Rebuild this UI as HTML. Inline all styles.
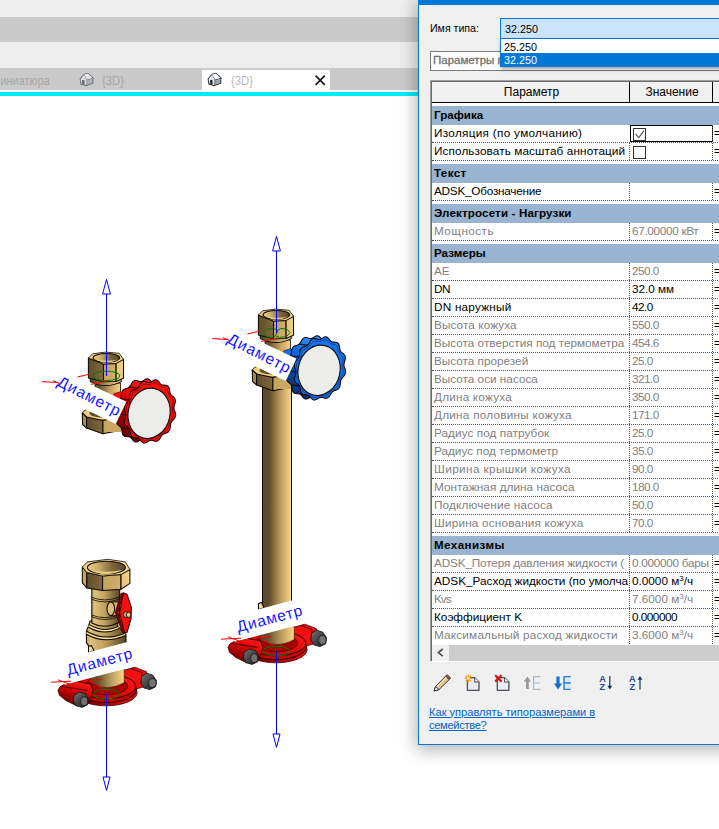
<!DOCTYPE html>
<html><head><meta charset="utf-8"><title>Revit</title>
<style>
*{box-sizing:border-box;margin:0;padding:0}
html,body{width:719px;height:829px;overflow:hidden;background:#fff;font-family:"Liberation Sans",sans-serif}
#app{position:relative;width:719px;height:829px;overflow:hidden;background:#fff}
.band{position:absolute;left:0;width:719px}
#b1{top:0;height:17px;background:#eee}
#b2{top:17px;height:25px;background:#cacaca}
#b3{top:42px;height:26px;background:#eee}
#tabs{top:68px;height:22px;background:#cacaca}
#cyan{top:92px;height:4px;background:#00eeff}
.tabtxt{position:absolute;font-size:12.6px;line-height:16px;top:73.4px;color:#a6a6a6;white-space:nowrap;transform-origin:0 0}
#acttab{position:absolute;left:202px;top:70px;width:128px;height:22px;background:#fff}
#view{position:absolute;left:0;top:96px;width:719px;height:733px;background:#fff}
#dlg{position:absolute;left:418px;top:0;width:320px;height:745px;background:#f0f0f0;border:1px solid #0078d7;border-top:5px solid #0078d7;box-shadow:0 3px 16px 2px rgba(0,0,0,.3)}
#lbl{position:absolute;left:430px;top:21px;font-size:10.6px;line-height:14px;color:#000;white-space:nowrap}
#combo{position:absolute;left:500px;top:18px;width:240px;height:21px;background:#cce4f7;border:1px solid #0078d7;font-size:10.8px;line-height:20px;padding-left:4px}
#list{position:absolute;left:500px;top:39px;width:240px;height:28px;background:#fff;border-left:1px solid #0078d7;box-shadow:1px 2px 4px rgba(0,0,0,.4);font-size:10.8px;line-height:13px;z-index:5}
#list div{height:14px;line-height:16px;padding-left:3px;white-space:nowrap}
#list div.s{background:#0078d7;color:#fff;height:14px;line-height:14px}
#search{position:absolute;left:430px;top:51px;width:300px;height:20px;background:#fff;border:1px solid #7a7a7a;font-size:11.5px;line-height:17px;padding-left:2px;color:#6b6b6b;white-space:nowrap;-webkit-text-stroke:.3px #777}
#tbl{position:absolute;left:430px;top:80px;width:300px;height:582px;background:#fff;border:1px solid #a0a0a0;border-bottom-color:#fff}
#tbl .in{position:absolute;left:0;top:0;right:0;bottom:0;border-left:1px solid #696969;border-top:1px solid #696969}
#hdr{position:absolute;left:432px;top:82px;width:290px;height:21px;background:#f0f0f0;border-bottom:1px solid #000;font-size:12px}
#hdr div{position:absolute;top:0;height:20px;line-height:21px;text-align:center;padding-left:2px;border-right:1px solid #000;color:#000}
#body{position:absolute;left:432px;top:103px;width:290px}
.grp{height:22px;padding-top:3px;background:#fff}
.grp span{display:block;height:19px;background:#99b4d1;font-weight:bold;font-size:11.6px;line-height:18px;padding-left:2px;color:#000;white-space:nowrap}
.row{height:18px;position:relative;font-size:11.75px;line-height:16px;color:#000;white-space:nowrap;border-bottom:1px dotted #555}
.row.dis{color:#7f7f7f}
.row:last-child{border-bottom-color:transparent}
.row>div{position:absolute;top:0;height:17px;overflow:hidden}
.c1{left:0;width:197px;padding-left:2px}
.c2{left:197px;width:83px;border-left:1px dotted #555;padding-left:2px}
.c3{left:280px;width:10px;border-left:1px dotted #555;padding-left:1px;color:#000}
.row.sel .c2{border:1px solid #000;left:198px;width:83px;height:17px;background:#fff;overflow:visible}
.cb{position:absolute;left:3px;top:3px;width:13px;height:13px;border:1px solid #333;background:#fff}
.row.sel .cb{left:2px;top:2px}
sup{font-size:8px;line-height:0;vertical-align:4px}
#hs{position:absolute;left:432px;top:645px;width:290px;height:16px;background:#f0f0f0}
#hs .th{position:absolute;left:17px;top:0;width:280px;height:16px;background:#cdcdcd}
#link{position:absolute;left:429px;top:705.5px;font-size:11.1px;line-height:13px;color:#0066cc;text-decoration:underline;white-space:nowrap}
svg{position:absolute;left:0;top:0;overflow:visible}
</style></head><body>
<div id="app">
<div id="view"></div>
<div class="band" id="b1"></div><div class="band" id="b2"></div><div class="band" id="b3"></div>
<div class="band" id="tabs"></div><div class="band" id="cyan"></div>
<div id="acttab"></div>
<div class="tabtxt" style="left:-6.6px;transform:scaleX(.865)">миниатюра</div>
<div class="tabtxt" style="left:102.4px;transform:scaleX(.9)">{3D}</div>
<div class="tabtxt" style="left:230.6px;color:#b9b9b9;transform:scaleX(.9)">{3D}</div>
<svg width="719" height="829" viewBox="0 0 719 829" style="z-index:1">
<defs>
<linearGradient id="gPipe" x1="0" x2="1" y1="0" y2="0">
 <stop offset="0" stop-color="#5c4b2b"/><stop offset="0.22" stop-color="#5f4e2d"/><stop offset="0.6" stop-color="#b6985a"/><stop offset="1" stop-color="#fdd888"/>
</linearGradient>
<linearGradient id="gBody" x1="0" x2="1" y1="0" y2="0">
 <stop offset="0" stop-color="#5c4b2b"/><stop offset="0.2" stop-color="#6b5730"/><stop offset="0.6" stop-color="#c4a25e"/><stop offset="1" stop-color="#f6d288"/>
</linearGradient>
<linearGradient id="gBodyL" x1="0" x2="1" y1="0" y2="0">
 <stop offset="0" stop-color="#c4a562"/><stop offset=".1" stop-color="#dcc07c"/><stop offset=".45" stop-color="#c2a25e"/><stop offset=".8" stop-color="#7c6638"/><stop offset="1" stop-color="#5a4828"/>
</linearGradient>
<linearGradient id="gDark" x1="0" x2="1" y1="0" y2="0">
 <stop offset="0" stop-color="#5f4d2b"/><stop offset="1" stop-color="#806a3c"/>
</linearGradient>
<linearGradient id="gMid" x1="0" x2="1" y1="0" y2="0">
 <stop offset="0" stop-color="#c4a35e"/><stop offset="1" stop-color="#d0af69"/>
</linearGradient>
<linearGradient id="gLight" x1="0" x2="1" y1="0" y2="0">
 <stop offset="0" stop-color="#e6c57b"/><stop offset="1" stop-color="#f2d086"/>
</linearGradient>
<linearGradient id="gHole" x1="0" x2="1" y1="0" y2="0">
 <stop offset="0" stop-color="#ecd08a"/><stop offset="0.3" stop-color="#c9aa66"/><stop offset="0.65" stop-color="#7a6536"/><stop offset="1" stop-color="#5a4928"/>
</linearGradient>
<linearGradient id="gTop" x1="0" x2="1" y1="0" y2="0">
 <stop offset="0" stop-color="#eccb82"/><stop offset="1" stop-color="#f8da90"/>
</linearGradient>
<linearGradient id="gRedSide" x1=".3" x2="0" y1="0" y2="1">
 <stop offset="0" stop-color="#ff1414"/><stop offset=".3" stop-color="#d80606"/><stop offset=".55" stop-color="#980000"/><stop offset="1" stop-color="#5a0000"/>
</linearGradient>
<linearGradient id="gBlueSide" x1=".3" x2="0" y1="0" y2="1">
 <stop offset="0" stop-color="#2a8cff"/><stop offset=".3" stop-color="#0a62d8"/><stop offset=".55" stop-color="#06449c"/><stop offset="1" stop-color="#032a62"/>
</linearGradient>
<linearGradient id="gEar" x1=".75" x2=".25" y1="0" y2="1">
 <stop offset="0" stop-color="#ff1c1c"/><stop offset=".35" stop-color="#e00808"/><stop offset=".7" stop-color="#980000"/><stop offset="1" stop-color="#5a0000"/>
</linearGradient>
<linearGradient id="gRing" x1="0" x2="1" y1="0" y2="0">
 <stop offset="0" stop-color="#5a0000"/><stop offset=".5" stop-color="#a80202"/><stop offset="1" stop-color="#e40c0c"/>
</linearGradient>
<linearGradient id="gRingTop" x1="0" x2="1" y1="1" y2="0">
 <stop offset="0" stop-color="#b00000"/><stop offset=".5" stop-color="#e00a0a"/><stop offset="1" stop-color="#ff1a1a"/>
</linearGradient>
<linearGradient id="gBolt" x1="0" x2="1" y1="0" y2="1">
 <stop offset="0" stop-color="#777"/><stop offset=".5" stop-color="#444"/><stop offset="1" stop-color="#1c1c1c"/>
</linearGradient>

<g id="headR">
<rect x="95" y="383" width="25.4" height="22" fill="url(#gBody)" stroke="#0e0901" stroke-width=".8"/>
<path d="M90.3,377.5 L90.3,381.6 Q106,389.5 121.2,381.6 L121.2,377.5 Z" fill="url(#gBody)" stroke="#0e0901" stroke-width="1.05"/>
<path d="M88.4,358 L103.5,364 L103.5,381.8 L88.4,378 Z" fill="url(#gDark)" stroke="#0e0901" stroke-width="1.05" stroke-linejoin="round"/>
<path d="M103.5,364 L116.1,363.4 L116.1,381.4 L103.5,381.8 Z" fill="url(#gMid)" stroke="#0e0901" stroke-width="1.05" stroke-linejoin="round"/>
<path d="M116.1,363.4 L123.5,359.3 L123.5,378.2 L116.1,381.4 Z" fill="url(#gLight)" stroke="#0e0901" stroke-width="1.05" stroke-linejoin="round"/>
<path d="M88.4,358 L92.6,353.8 L105.5,352.1 L119.2,353.3 L123.5,359.3 L116.1,363.4 L103.5,364 Z" fill="url(#gTop)" stroke="#0e0901" stroke-width=".8" stroke-linejoin="round"/>
<ellipse cx="106.4" cy="357.8" rx="13.3" ry="4.4" fill="url(#gHole)" stroke="#0e0901" stroke-width="1.05"/>
<path d="M95,359.6 Q106.4,365.4 118.6,359.4 Q106.4,362 95,359.6Z" fill="#f3d58a" opacity=".9"/>
<ellipse cx="101.6" cy="413.6" rx="19.4" ry="6.6" fill="url(#gTop)" stroke="#0e0901" stroke-width=".8"/>
<ellipse cx="103" cy="413.2" rx="13.4" ry="4.4" fill="#5c4b2b"/>
<path d="M82.3,413 L86.6,417 L86.6,428 L82.6,424.6 Z" fill="#a88a4e" stroke="#0e0901" stroke-width="1.05" stroke-linejoin="round"/>
<path d="M86.6,417 L102.9,420.6 L102.9,433.8 L86.6,428 Z" fill="url(#gDark)" stroke="#0e0901" stroke-width="1.05" stroke-linejoin="round"/>
<path d="M102.9,420.6 L119.8,417 L119.8,430.4 L102.9,433.8 Z" fill="url(#gMid)" stroke="#0e0901" stroke-width="1.05" stroke-linejoin="round"/>
<path d="M108,392 L121,392 L121,432 L108,432 Z" fill="#c9a862"/>
<path d="M113.6,394 L120.6,391.6 L124,395.4 L121,400.6 L114.4,398.6 Z" fill="#f50f0f" stroke="#300" stroke-width=".5"/>
<path d="M166.7,416.2 L166.3,417.0 L165.8,417.7 L165.3,418.4 L164.7,419.0 L164.2,419.6 L163.6,420.3 L163.2,420.9 L162.8,421.6 L162.5,422.3 L162.3,423.0 L162.1,423.8 L162.0,424.7 L161.9,425.6 L161.8,426.5 L161.7,427.4 L161.5,428.3 L161.2,429.1 L160.8,429.8 L160.3,430.5 L159.8,431.0 L159.1,431.5 L158.4,431.8 L157.7,432.1 L156.9,432.4 L156.2,432.6 L155.5,432.9 L154.9,433.2 L154.3,433.5 L153.8,434.0 L153.3,434.6 L152.8,435.2 L152.4,435.9 L152.0,436.7 L151.5,437.5 L151.0,438.2 L150.5,438.9 L149.9,439.4 L149.3,439.9 L148.6,440.2 L147.9,440.3 L147.2,440.3 L146.5,440.2 L145.8,440.1 L145.1,439.8 L144.4,439.6 L143.7,439.4 L143.1,439.3 L142.4,439.3 L141.8,439.4 L141.2,439.6 L140.5,439.9 L139.9,440.3 L139.2,440.7 L138.5,441.2 L137.8,441.5 L137.1,441.8 L136.4,442.0 L135.7,442.0 L135.0,441.9 L134.4,441.6 L133.8,441.2 L133.3,440.6 L132.7,440.1 L132.3,439.4 L131.8,438.8 L131.3,438.2 L130.8,437.7 L130.3,437.3 L129.8,437.0 L129.2,436.9 L128.5,436.8 L127.8,436.7 L127.1,436.7 L126.3,436.6 L125.6,436.5 L124.9,436.4 L124.3,436.1 L123.7,435.7 L123.2,435.2 L122.8,434.5 L122.5,433.8 L122.3,433.0 L122.1,432.1 L122.0,431.2 L121.8,430.4 L121.7,429.6 L121.5,428.8 L121.2,428.1 L120.9,427.5 L120.5,427.0 L120.0,426.5 L119.4,426.0 L118.9,425.6 L118.3,425.1 L117.7,424.5 L117.2,424.0 L116.8,423.3 L116.5,422.6 L116.3,421.8 L116.2,421.0 L116.3,420.1 L116.4,419.2 L116.7,418.3 L116.9,417.5 L117.2,416.6 L117.4,415.8 L117.5,415.0 L117.6,414.2 L117.6,413.4 L117.5,412.7 L117.3,411.9 L117.0,411.2 L116.7,410.4 L116.4,409.6 L116.2,408.8 L116.0,407.9 L116.0,407.1 L116.0,406.2 L116.2,405.4 L116.5,404.6 L116.9,403.8 L117.4,403.1 L117.9,402.4 L118.5,401.8 L119.0,401.2 L119.6,400.5 L120.0,399.9 L120.4,399.2 L120.7,398.5 L120.9,397.8 L121.1,397.0 L121.2,396.1 L121.3,395.2 L121.4,394.3 L121.5,393.4 L121.7,392.5 L122.0,391.7 L122.4,391.0 L122.9,390.3 L123.4,389.8 L124.1,389.3 L124.8,389.0 L125.5,388.7 L126.3,388.4 L127.0,388.2 L127.7,387.9 L128.3,387.6 L128.9,387.3 L129.4,386.8 L129.9,386.2 L130.4,385.6 L130.8,384.9 L131.2,384.1 L131.7,383.3 L132.2,382.6 L132.7,381.9 L133.3,381.4 L133.9,380.9 L134.6,380.6 L135.3,380.5 L136.0,380.5 L136.7,380.6 L137.4,380.7 L138.1,381.0 L138.8,381.2 L139.5,381.4 L140.1,381.5 L140.8,381.5 L141.4,381.4 L142.0,381.2 L142.7,380.9 L143.3,380.5 L144.0,380.1 L144.7,379.6 L145.4,379.3 L146.1,379.0 L146.8,378.8 L147.5,378.8 L148.2,378.9 L148.8,379.2 L149.4,379.6 L149.9,380.2 L150.5,380.7 L150.9,381.4 L151.4,382.0 L151.9,382.6 L152.4,383.1 L152.9,383.5 L153.4,383.8 L154.0,383.9 L154.7,384.0 L155.4,384.1 L156.1,384.1 L156.9,384.2 L157.6,384.3 L158.3,384.4 L158.9,384.7 L159.5,385.1 L160.0,385.6 L160.4,386.3 L160.7,387.0 L160.9,387.8 L161.1,388.7 L161.2,389.6 L161.4,390.4 L161.5,391.2 L161.7,392.0 L162.0,392.7 L162.3,393.3 L162.7,393.8 L163.2,394.3 L163.8,394.8 L164.3,395.2 L164.9,395.7 L165.5,396.3 L166.0,396.8 L166.4,397.5 L166.7,398.2 L166.9,399.0 L167.0,399.8 L166.9,400.7 L166.8,401.6 L166.5,402.5 L166.3,403.3 L166.0,404.2 L165.8,405.0 L165.7,405.8 L165.6,406.6 L165.6,407.4 L165.7,408.1 L165.9,408.9 L166.2,409.6 L166.5,410.4 L166.8,411.2 L167.0,412.0 L167.2,412.9 L167.2,413.7 L167.2,414.6 L167.0,415.4Z" fill="url(#gRedSide)" stroke="#1a0000" stroke-width="1.05"/>
<path d="M138.5,438.2 L130.1,437.2 M129.5,428.9 L121.1,427.9 M126.0,414.9 L117.6,413.9 M128.9,399.9 L120.5,398.9 M137.5,388.1 L129.1,387.1 M149.4,382.5 L141.0,381.5" fill="none" stroke="#1a0000" stroke-width="1.2" opacity=".75"/>
<path d="M175.1,417.2 L174.7,418.0 L174.2,418.7 L173.7,419.4 L173.1,420.0 L172.6,420.6 L172.0,421.3 L171.6,421.9 L171.2,422.6 L170.9,423.3 L170.7,424.0 L170.5,424.8 L170.4,425.7 L170.3,426.6 L170.2,427.5 L170.1,428.4 L169.9,429.3 L169.6,430.1 L169.2,430.8 L168.7,431.5 L168.2,432.0 L167.5,432.5 L166.8,432.8 L166.1,433.1 L165.3,433.4 L164.6,433.6 L163.9,433.9 L163.3,434.2 L162.7,434.5 L162.2,435.0 L161.7,435.6 L161.2,436.2 L160.8,436.9 L160.4,437.7 L159.9,438.5 L159.4,439.2 L158.9,439.9 L158.3,440.4 L157.7,440.9 L157.0,441.2 L156.3,441.3 L155.6,441.3 L154.9,441.2 L154.2,441.1 L153.5,440.8 L152.8,440.6 L152.1,440.4 L151.5,440.3 L150.8,440.3 L150.2,440.4 L149.6,440.6 L148.9,440.9 L148.3,441.3 L147.6,441.7 L146.9,442.2 L146.2,442.5 L145.5,442.8 L144.8,443.0 L144.1,443.0 L143.4,442.9 L142.8,442.6 L142.2,442.2 L141.7,441.6 L141.1,441.1 L140.7,440.4 L140.2,439.8 L139.7,439.2 L139.2,438.7 L138.7,438.3 L138.2,438.0 L137.6,437.9 L136.9,437.8 L136.2,437.7 L135.5,437.7 L134.7,437.6 L134.0,437.5 L133.3,437.4 L132.7,437.1 L132.1,436.7 L131.6,436.2 L131.2,435.5 L130.9,434.8 L130.7,434.0 L130.5,433.1 L130.4,432.2 L130.2,431.4 L130.1,430.6 L129.9,429.8 L129.6,429.1 L129.3,428.5 L128.9,428.0 L128.4,427.5 L127.8,427.0 L127.3,426.6 L126.7,426.1 L126.1,425.5 L125.6,425.0 L125.2,424.3 L124.9,423.6 L124.7,422.8 L124.6,422.0 L124.7,421.1 L124.8,420.2 L125.1,419.3 L125.3,418.5 L125.6,417.6 L125.8,416.8 L125.9,416.0 L126.0,415.2 L126.0,414.4 L125.9,413.7 L125.7,412.9 L125.4,412.2 L125.1,411.4 L124.8,410.6 L124.6,409.8 L124.4,408.9 L124.4,408.1 L124.4,407.2 L124.6,406.4 L124.9,405.6 L125.3,404.8 L125.8,404.1 L126.3,403.4 L126.9,402.8 L127.4,402.2 L128.0,401.5 L128.4,400.9 L128.8,400.2 L129.1,399.5 L129.3,398.8 L129.5,398.0 L129.6,397.1 L129.7,396.2 L129.8,395.3 L129.9,394.4 L130.1,393.5 L130.4,392.7 L130.8,392.0 L131.3,391.3 L131.8,390.8 L132.5,390.3 L133.2,390.0 L133.9,389.7 L134.7,389.4 L135.4,389.2 L136.1,388.9 L136.7,388.6 L137.3,388.3 L137.8,387.8 L138.3,387.2 L138.8,386.6 L139.2,385.9 L139.6,385.1 L140.1,384.3 L140.6,383.6 L141.1,382.9 L141.7,382.4 L142.3,381.9 L143.0,381.6 L143.7,381.5 L144.4,381.5 L145.1,381.6 L145.8,381.7 L146.5,382.0 L147.2,382.2 L147.9,382.4 L148.5,382.5 L149.2,382.5 L149.8,382.4 L150.4,382.2 L151.1,381.9 L151.7,381.5 L152.4,381.1 L153.1,380.6 L153.8,380.3 L154.5,380.0 L155.2,379.8 L155.9,379.8 L156.6,379.9 L157.2,380.2 L157.8,380.6 L158.3,381.2 L158.9,381.7 L159.3,382.4 L159.8,383.0 L160.3,383.6 L160.8,384.1 L161.3,384.5 L161.8,384.8 L162.4,384.9 L163.1,385.0 L163.8,385.1 L164.5,385.1 L165.3,385.2 L166.0,385.3 L166.7,385.4 L167.3,385.7 L167.9,386.1 L168.4,386.6 L168.8,387.3 L169.1,388.0 L169.3,388.8 L169.5,389.7 L169.6,390.6 L169.8,391.4 L169.9,392.2 L170.1,393.0 L170.4,393.7 L170.7,394.3 L171.1,394.8 L171.6,395.3 L172.2,395.8 L172.7,396.2 L173.3,396.7 L173.9,397.3 L174.4,397.8 L174.8,398.5 L175.1,399.2 L175.3,400.0 L175.4,400.8 L175.3,401.7 L175.2,402.6 L174.9,403.5 L174.7,404.3 L174.4,405.2 L174.2,406.0 L174.1,406.8 L174.0,407.6 L174.0,408.4 L174.1,409.1 L174.3,409.9 L174.6,410.6 L174.9,411.4 L175.2,412.2 L175.4,413.0 L175.6,413.9 L175.6,414.7 L175.6,415.6 L175.4,416.4Z" fill="#f50f0f" stroke="#1a0000" stroke-width="1.05"/>
<path d="M172.9,416.9 L172.6,417.6 L172.2,418.3 L171.7,418.9 L171.3,419.5 L170.8,420.2 L170.4,420.8 L170.0,421.4 L169.7,422.0 L169.4,422.7 L169.2,423.3 L169.0,424.1 L168.9,424.8 L168.7,425.6 L168.6,426.4 L168.4,427.2 L168.1,427.9 L167.8,428.7 L167.5,429.3 L167.0,429.9 L166.5,430.4 L166.0,430.9 L165.4,431.3 L164.8,431.6 L164.1,431.9 L163.5,432.2 L162.9,432.5 L162.3,432.8 L161.8,433.2 L161.3,433.6 L160.8,434.1 L160.4,434.6 L160.0,435.2 L159.5,435.9 L159.1,436.5 L158.6,437.1 L158.1,437.6 L157.5,438.1 L157.0,438.5 L156.4,438.8 L155.7,438.9 L155.1,439.0 L154.5,439.0 L153.8,438.9 L153.2,438.8 L152.6,438.7 L151.9,438.6 L151.3,438.5 L150.8,438.5 L150.2,438.6 L149.6,438.8 L149.0,439.0 L148.4,439.3 L147.8,439.6 L147.1,439.9 L146.5,440.2 L145.9,440.4 L145.2,440.5 L144.6,440.5 L144.0,440.4 L143.4,440.1 L142.9,439.8 L142.3,439.4 L141.9,438.9 L141.4,438.4 L140.9,437.9 L140.5,437.5 L140.0,437.0 L139.5,436.7 L139.0,436.4 L138.4,436.2 L137.9,436.1 L137.3,436.0 L136.6,435.9 L136.0,435.8 L135.4,435.6 L134.7,435.4 L134.2,435.1 L133.7,434.7 L133.2,434.2 L132.8,433.7 L132.5,433.0 L132.3,432.3 L132.1,431.6 L131.9,430.8 L131.7,430.1 L131.5,429.4 L131.3,428.8 L131.1,428.1 L130.8,427.6 L130.4,427.1 L130.0,426.6 L129.5,426.1 L129.1,425.6 L128.6,425.1 L128.1,424.6 L127.7,424.0 L127.4,423.4 L127.1,422.7 L127.0,422.0 L126.9,421.3 L126.9,420.5 L127.0,419.7 L127.1,418.9 L127.3,418.1 L127.4,417.4 L127.6,416.6 L127.7,415.9 L127.7,415.1 L127.7,414.4 L127.6,413.7 L127.5,413.0 L127.3,412.3 L127.1,411.6 L126.9,410.9 L126.8,410.1 L126.7,409.3 L126.6,408.6 L126.7,407.8 L126.9,407.0 L127.1,406.3 L127.4,405.6 L127.8,404.9 L128.3,404.3 L128.7,403.7 L129.2,403.0 L129.6,402.4 L130.0,401.8 L130.3,401.2 L130.6,400.5 L130.8,399.9 L131.0,399.1 L131.1,398.4 L131.3,397.6 L131.4,396.8 L131.6,396.0 L131.9,395.3 L132.2,394.5 L132.5,393.9 L133.0,393.3 L133.5,392.8 L134.0,392.3 L134.6,391.9 L135.2,391.6 L135.9,391.3 L136.5,391.0 L137.1,390.7 L137.7,390.4 L138.2,390.0 L138.7,389.6 L139.2,389.1 L139.6,388.6 L140.0,388.0 L140.5,387.3 L140.9,386.7 L141.4,386.1 L141.9,385.6 L142.5,385.1 L143.0,384.7 L143.6,384.4 L144.3,384.3 L144.9,384.2 L145.5,384.2 L146.2,384.3 L146.8,384.4 L147.4,384.5 L148.1,384.6 L148.7,384.7 L149.2,384.7 L149.8,384.6 L150.4,384.4 L151.0,384.2 L151.6,383.9 L152.2,383.6 L152.9,383.3 L153.5,383.0 L154.1,382.8 L154.8,382.7 L155.4,382.7 L156.0,382.8 L156.6,383.1 L157.1,383.4 L157.7,383.8 L158.1,384.3 L158.6,384.8 L159.1,385.3 L159.5,385.7 L160.0,386.2 L160.5,386.5 L161.0,386.8 L161.6,387.0 L162.1,387.1 L162.7,387.2 L163.4,387.3 L164.0,387.4 L164.6,387.6 L165.3,387.8 L165.8,388.1 L166.3,388.5 L166.8,389.0 L167.2,389.5 L167.5,390.2 L167.7,390.9 L167.9,391.6 L168.1,392.4 L168.3,393.1 L168.5,393.8 L168.7,394.4 L168.9,395.1 L169.2,395.6 L169.6,396.1 L170.0,396.6 L170.5,397.1 L170.9,397.6 L171.4,398.1 L171.9,398.6 L172.3,399.2 L172.6,399.8 L172.9,400.5 L173.0,401.2 L173.1,401.9 L173.1,402.7 L173.0,403.5 L172.9,404.3 L172.7,405.1 L172.6,405.8 L172.4,406.6 L172.3,407.3 L172.3,408.1 L172.3,408.8 L172.4,409.5 L172.5,410.2 L172.7,410.9 L172.9,411.6 L173.1,412.3 L173.2,413.1 L173.3,413.9 L173.4,414.6 L173.3,415.4 L173.1,416.2Z" fill="none" stroke="#7a0000" stroke-width=".8"/>
<ellipse cx="149.1" cy="413.3" rx="20.9" ry="25.3" transform="rotate(13 149.1 413.3)" fill="#ececea" stroke="#111" stroke-width="1.1"/>
</g>
<g id="headB">
<rect x="95" y="383" width="25.4" height="22" fill="url(#gBody)" stroke="#0e0901" stroke-width=".8"/>
<path d="M90.3,377.5 L90.3,381.6 Q106,389.5 121.2,381.6 L121.2,377.5 Z" fill="url(#gBody)" stroke="#0e0901" stroke-width="1.05"/>
<path d="M88.4,358 L103.5,364 L103.5,381.8 L88.4,378 Z" fill="url(#gDark)" stroke="#0e0901" stroke-width="1.05" stroke-linejoin="round"/>
<path d="M103.5,364 L116.1,363.4 L116.1,381.4 L103.5,381.8 Z" fill="url(#gMid)" stroke="#0e0901" stroke-width="1.05" stroke-linejoin="round"/>
<path d="M116.1,363.4 L123.5,359.3 L123.5,378.2 L116.1,381.4 Z" fill="url(#gLight)" stroke="#0e0901" stroke-width="1.05" stroke-linejoin="round"/>
<path d="M88.4,358 L92.6,353.8 L105.5,352.1 L119.2,353.3 L123.5,359.3 L116.1,363.4 L103.5,364 Z" fill="url(#gTop)" stroke="#0e0901" stroke-width=".8" stroke-linejoin="round"/>
<ellipse cx="106.4" cy="357.8" rx="13.3" ry="4.4" fill="url(#gHole)" stroke="#0e0901" stroke-width="1.05"/>
<path d="M95,359.6 Q106.4,365.4 118.6,359.4 Q106.4,362 95,359.6Z" fill="#f3d58a" opacity=".9"/>
<ellipse cx="101.6" cy="413.6" rx="19.4" ry="6.6" fill="url(#gTop)" stroke="#0e0901" stroke-width=".8"/>
<ellipse cx="103" cy="413.2" rx="13.4" ry="4.4" fill="#5c4b2b"/>
<path d="M82.3,413 L86.6,417 L86.6,428 L82.6,424.6 Z" fill="#a88a4e" stroke="#0e0901" stroke-width="1.05" stroke-linejoin="round"/>
<path d="M86.6,417 L102.9,420.6 L102.9,433.8 L86.6,428 Z" fill="url(#gDark)" stroke="#0e0901" stroke-width="1.05" stroke-linejoin="round"/>
<path d="M102.9,420.6 L119.8,417 L119.8,430.4 L102.9,433.8 Z" fill="url(#gMid)" stroke="#0e0901" stroke-width="1.05" stroke-linejoin="round"/>
<path d="M108,392 L121,392 L121,432 L108,432 Z" fill="#c9a862"/>
<path d="M113.6,394 L120.6,391.6 L124,395.4 L121,400.6 L114.4,398.6 Z" fill="#1672e6" stroke="#300" stroke-width=".5"/>
<path d="M166.7,416.2 L166.3,417.0 L165.8,417.7 L165.3,418.4 L164.7,419.0 L164.2,419.6 L163.6,420.3 L163.2,420.9 L162.8,421.6 L162.5,422.3 L162.3,423.0 L162.1,423.8 L162.0,424.7 L161.9,425.6 L161.8,426.5 L161.7,427.4 L161.5,428.3 L161.2,429.1 L160.8,429.8 L160.3,430.5 L159.8,431.0 L159.1,431.5 L158.4,431.8 L157.7,432.1 L156.9,432.4 L156.2,432.6 L155.5,432.9 L154.9,433.2 L154.3,433.5 L153.8,434.0 L153.3,434.6 L152.8,435.2 L152.4,435.9 L152.0,436.7 L151.5,437.5 L151.0,438.2 L150.5,438.9 L149.9,439.4 L149.3,439.9 L148.6,440.2 L147.9,440.3 L147.2,440.3 L146.5,440.2 L145.8,440.1 L145.1,439.8 L144.4,439.6 L143.7,439.4 L143.1,439.3 L142.4,439.3 L141.8,439.4 L141.2,439.6 L140.5,439.9 L139.9,440.3 L139.2,440.7 L138.5,441.2 L137.8,441.5 L137.1,441.8 L136.4,442.0 L135.7,442.0 L135.0,441.9 L134.4,441.6 L133.8,441.2 L133.3,440.6 L132.7,440.1 L132.3,439.4 L131.8,438.8 L131.3,438.2 L130.8,437.7 L130.3,437.3 L129.8,437.0 L129.2,436.9 L128.5,436.8 L127.8,436.7 L127.1,436.7 L126.3,436.6 L125.6,436.5 L124.9,436.4 L124.3,436.1 L123.7,435.7 L123.2,435.2 L122.8,434.5 L122.5,433.8 L122.3,433.0 L122.1,432.1 L122.0,431.2 L121.8,430.4 L121.7,429.6 L121.5,428.8 L121.2,428.1 L120.9,427.5 L120.5,427.0 L120.0,426.5 L119.4,426.0 L118.9,425.6 L118.3,425.1 L117.7,424.5 L117.2,424.0 L116.8,423.3 L116.5,422.6 L116.3,421.8 L116.2,421.0 L116.3,420.1 L116.4,419.2 L116.7,418.3 L116.9,417.5 L117.2,416.6 L117.4,415.8 L117.5,415.0 L117.6,414.2 L117.6,413.4 L117.5,412.7 L117.3,411.9 L117.0,411.2 L116.7,410.4 L116.4,409.6 L116.2,408.8 L116.0,407.9 L116.0,407.1 L116.0,406.2 L116.2,405.4 L116.5,404.6 L116.9,403.8 L117.4,403.1 L117.9,402.4 L118.5,401.8 L119.0,401.2 L119.6,400.5 L120.0,399.9 L120.4,399.2 L120.7,398.5 L120.9,397.8 L121.1,397.0 L121.2,396.1 L121.3,395.2 L121.4,394.3 L121.5,393.4 L121.7,392.5 L122.0,391.7 L122.4,391.0 L122.9,390.3 L123.4,389.8 L124.1,389.3 L124.8,389.0 L125.5,388.7 L126.3,388.4 L127.0,388.2 L127.7,387.9 L128.3,387.6 L128.9,387.3 L129.4,386.8 L129.9,386.2 L130.4,385.6 L130.8,384.9 L131.2,384.1 L131.7,383.3 L132.2,382.6 L132.7,381.9 L133.3,381.4 L133.9,380.9 L134.6,380.6 L135.3,380.5 L136.0,380.5 L136.7,380.6 L137.4,380.7 L138.1,381.0 L138.8,381.2 L139.5,381.4 L140.1,381.5 L140.8,381.5 L141.4,381.4 L142.0,381.2 L142.7,380.9 L143.3,380.5 L144.0,380.1 L144.7,379.6 L145.4,379.3 L146.1,379.0 L146.8,378.8 L147.5,378.8 L148.2,378.9 L148.8,379.2 L149.4,379.6 L149.9,380.2 L150.5,380.7 L150.9,381.4 L151.4,382.0 L151.9,382.6 L152.4,383.1 L152.9,383.5 L153.4,383.8 L154.0,383.9 L154.7,384.0 L155.4,384.1 L156.1,384.1 L156.9,384.2 L157.6,384.3 L158.3,384.4 L158.9,384.7 L159.5,385.1 L160.0,385.6 L160.4,386.3 L160.7,387.0 L160.9,387.8 L161.1,388.7 L161.2,389.6 L161.4,390.4 L161.5,391.2 L161.7,392.0 L162.0,392.7 L162.3,393.3 L162.7,393.8 L163.2,394.3 L163.8,394.8 L164.3,395.2 L164.9,395.7 L165.5,396.3 L166.0,396.8 L166.4,397.5 L166.7,398.2 L166.9,399.0 L167.0,399.8 L166.9,400.7 L166.8,401.6 L166.5,402.5 L166.3,403.3 L166.0,404.2 L165.8,405.0 L165.7,405.8 L165.6,406.6 L165.6,407.4 L165.7,408.1 L165.9,408.9 L166.2,409.6 L166.5,410.4 L166.8,411.2 L167.0,412.0 L167.2,412.9 L167.2,413.7 L167.2,414.6 L167.0,415.4Z" fill="url(#gBlueSide)" stroke="#1a0000" stroke-width="1.05"/>
<path d="M138.5,438.2 L130.1,437.2 M129.5,428.9 L121.1,427.9 M126.0,414.9 L117.6,413.9 M128.9,399.9 L120.5,398.9 M137.5,388.1 L129.1,387.1 M149.4,382.5 L141.0,381.5" fill="none" stroke="#1a0000" stroke-width="1.2" opacity=".75"/>
<path d="M175.1,417.2 L174.7,418.0 L174.2,418.7 L173.7,419.4 L173.1,420.0 L172.6,420.6 L172.0,421.3 L171.6,421.9 L171.2,422.6 L170.9,423.3 L170.7,424.0 L170.5,424.8 L170.4,425.7 L170.3,426.6 L170.2,427.5 L170.1,428.4 L169.9,429.3 L169.6,430.1 L169.2,430.8 L168.7,431.5 L168.2,432.0 L167.5,432.5 L166.8,432.8 L166.1,433.1 L165.3,433.4 L164.6,433.6 L163.9,433.9 L163.3,434.2 L162.7,434.5 L162.2,435.0 L161.7,435.6 L161.2,436.2 L160.8,436.9 L160.4,437.7 L159.9,438.5 L159.4,439.2 L158.9,439.9 L158.3,440.4 L157.7,440.9 L157.0,441.2 L156.3,441.3 L155.6,441.3 L154.9,441.2 L154.2,441.1 L153.5,440.8 L152.8,440.6 L152.1,440.4 L151.5,440.3 L150.8,440.3 L150.2,440.4 L149.6,440.6 L148.9,440.9 L148.3,441.3 L147.6,441.7 L146.9,442.2 L146.2,442.5 L145.5,442.8 L144.8,443.0 L144.1,443.0 L143.4,442.9 L142.8,442.6 L142.2,442.2 L141.7,441.6 L141.1,441.1 L140.7,440.4 L140.2,439.8 L139.7,439.2 L139.2,438.7 L138.7,438.3 L138.2,438.0 L137.6,437.9 L136.9,437.8 L136.2,437.7 L135.5,437.7 L134.7,437.6 L134.0,437.5 L133.3,437.4 L132.7,437.1 L132.1,436.7 L131.6,436.2 L131.2,435.5 L130.9,434.8 L130.7,434.0 L130.5,433.1 L130.4,432.2 L130.2,431.4 L130.1,430.6 L129.9,429.8 L129.6,429.1 L129.3,428.5 L128.9,428.0 L128.4,427.5 L127.8,427.0 L127.3,426.6 L126.7,426.1 L126.1,425.5 L125.6,425.0 L125.2,424.3 L124.9,423.6 L124.7,422.8 L124.6,422.0 L124.7,421.1 L124.8,420.2 L125.1,419.3 L125.3,418.5 L125.6,417.6 L125.8,416.8 L125.9,416.0 L126.0,415.2 L126.0,414.4 L125.9,413.7 L125.7,412.9 L125.4,412.2 L125.1,411.4 L124.8,410.6 L124.6,409.8 L124.4,408.9 L124.4,408.1 L124.4,407.2 L124.6,406.4 L124.9,405.6 L125.3,404.8 L125.8,404.1 L126.3,403.4 L126.9,402.8 L127.4,402.2 L128.0,401.5 L128.4,400.9 L128.8,400.2 L129.1,399.5 L129.3,398.8 L129.5,398.0 L129.6,397.1 L129.7,396.2 L129.8,395.3 L129.9,394.4 L130.1,393.5 L130.4,392.7 L130.8,392.0 L131.3,391.3 L131.8,390.8 L132.5,390.3 L133.2,390.0 L133.9,389.7 L134.7,389.4 L135.4,389.2 L136.1,388.9 L136.7,388.6 L137.3,388.3 L137.8,387.8 L138.3,387.2 L138.8,386.6 L139.2,385.9 L139.6,385.1 L140.1,384.3 L140.6,383.6 L141.1,382.9 L141.7,382.4 L142.3,381.9 L143.0,381.6 L143.7,381.5 L144.4,381.5 L145.1,381.6 L145.8,381.7 L146.5,382.0 L147.2,382.2 L147.9,382.4 L148.5,382.5 L149.2,382.5 L149.8,382.4 L150.4,382.2 L151.1,381.9 L151.7,381.5 L152.4,381.1 L153.1,380.6 L153.8,380.3 L154.5,380.0 L155.2,379.8 L155.9,379.8 L156.6,379.9 L157.2,380.2 L157.8,380.6 L158.3,381.2 L158.9,381.7 L159.3,382.4 L159.8,383.0 L160.3,383.6 L160.8,384.1 L161.3,384.5 L161.8,384.8 L162.4,384.9 L163.1,385.0 L163.8,385.1 L164.5,385.1 L165.3,385.2 L166.0,385.3 L166.7,385.4 L167.3,385.7 L167.9,386.1 L168.4,386.6 L168.8,387.3 L169.1,388.0 L169.3,388.8 L169.5,389.7 L169.6,390.6 L169.8,391.4 L169.9,392.2 L170.1,393.0 L170.4,393.7 L170.7,394.3 L171.1,394.8 L171.6,395.3 L172.2,395.8 L172.7,396.2 L173.3,396.7 L173.9,397.3 L174.4,397.8 L174.8,398.5 L175.1,399.2 L175.3,400.0 L175.4,400.8 L175.3,401.7 L175.2,402.6 L174.9,403.5 L174.7,404.3 L174.4,405.2 L174.2,406.0 L174.1,406.8 L174.0,407.6 L174.0,408.4 L174.1,409.1 L174.3,409.9 L174.6,410.6 L174.9,411.4 L175.2,412.2 L175.4,413.0 L175.6,413.9 L175.6,414.7 L175.6,415.6 L175.4,416.4Z" fill="#1672e6" stroke="#1a0000" stroke-width="1.05"/>
<path d="M172.9,416.9 L172.6,417.6 L172.2,418.3 L171.7,418.9 L171.3,419.5 L170.8,420.2 L170.4,420.8 L170.0,421.4 L169.7,422.0 L169.4,422.7 L169.2,423.3 L169.0,424.1 L168.9,424.8 L168.7,425.6 L168.6,426.4 L168.4,427.2 L168.1,427.9 L167.8,428.7 L167.5,429.3 L167.0,429.9 L166.5,430.4 L166.0,430.9 L165.4,431.3 L164.8,431.6 L164.1,431.9 L163.5,432.2 L162.9,432.5 L162.3,432.8 L161.8,433.2 L161.3,433.6 L160.8,434.1 L160.4,434.6 L160.0,435.2 L159.5,435.9 L159.1,436.5 L158.6,437.1 L158.1,437.6 L157.5,438.1 L157.0,438.5 L156.4,438.8 L155.7,438.9 L155.1,439.0 L154.5,439.0 L153.8,438.9 L153.2,438.8 L152.6,438.7 L151.9,438.6 L151.3,438.5 L150.8,438.5 L150.2,438.6 L149.6,438.8 L149.0,439.0 L148.4,439.3 L147.8,439.6 L147.1,439.9 L146.5,440.2 L145.9,440.4 L145.2,440.5 L144.6,440.5 L144.0,440.4 L143.4,440.1 L142.9,439.8 L142.3,439.4 L141.9,438.9 L141.4,438.4 L140.9,437.9 L140.5,437.5 L140.0,437.0 L139.5,436.7 L139.0,436.4 L138.4,436.2 L137.9,436.1 L137.3,436.0 L136.6,435.9 L136.0,435.8 L135.4,435.6 L134.7,435.4 L134.2,435.1 L133.7,434.7 L133.2,434.2 L132.8,433.7 L132.5,433.0 L132.3,432.3 L132.1,431.6 L131.9,430.8 L131.7,430.1 L131.5,429.4 L131.3,428.8 L131.1,428.1 L130.8,427.6 L130.4,427.1 L130.0,426.6 L129.5,426.1 L129.1,425.6 L128.6,425.1 L128.1,424.6 L127.7,424.0 L127.4,423.4 L127.1,422.7 L127.0,422.0 L126.9,421.3 L126.9,420.5 L127.0,419.7 L127.1,418.9 L127.3,418.1 L127.4,417.4 L127.6,416.6 L127.7,415.9 L127.7,415.1 L127.7,414.4 L127.6,413.7 L127.5,413.0 L127.3,412.3 L127.1,411.6 L126.9,410.9 L126.8,410.1 L126.7,409.3 L126.6,408.6 L126.7,407.8 L126.9,407.0 L127.1,406.3 L127.4,405.6 L127.8,404.9 L128.3,404.3 L128.7,403.7 L129.2,403.0 L129.6,402.4 L130.0,401.8 L130.3,401.2 L130.6,400.5 L130.8,399.9 L131.0,399.1 L131.1,398.4 L131.3,397.6 L131.4,396.8 L131.6,396.0 L131.9,395.3 L132.2,394.5 L132.5,393.9 L133.0,393.3 L133.5,392.8 L134.0,392.3 L134.6,391.9 L135.2,391.6 L135.9,391.3 L136.5,391.0 L137.1,390.7 L137.7,390.4 L138.2,390.0 L138.7,389.6 L139.2,389.1 L139.6,388.6 L140.0,388.0 L140.5,387.3 L140.9,386.7 L141.4,386.1 L141.9,385.6 L142.5,385.1 L143.0,384.7 L143.6,384.4 L144.3,384.3 L144.9,384.2 L145.5,384.2 L146.2,384.3 L146.8,384.4 L147.4,384.5 L148.1,384.6 L148.7,384.7 L149.2,384.7 L149.8,384.6 L150.4,384.4 L151.0,384.2 L151.6,383.9 L152.2,383.6 L152.9,383.3 L153.5,383.0 L154.1,382.8 L154.8,382.7 L155.4,382.7 L156.0,382.8 L156.6,383.1 L157.1,383.4 L157.7,383.8 L158.1,384.3 L158.6,384.8 L159.1,385.3 L159.5,385.7 L160.0,386.2 L160.5,386.5 L161.0,386.8 L161.6,387.0 L162.1,387.1 L162.7,387.2 L163.4,387.3 L164.0,387.4 L164.6,387.6 L165.3,387.8 L165.8,388.1 L166.3,388.5 L166.8,389.0 L167.2,389.5 L167.5,390.2 L167.7,390.9 L167.9,391.6 L168.1,392.4 L168.3,393.1 L168.5,393.8 L168.7,394.4 L168.9,395.1 L169.2,395.6 L169.6,396.1 L170.0,396.6 L170.5,397.1 L170.9,397.6 L171.4,398.1 L171.9,398.6 L172.3,399.2 L172.6,399.8 L172.9,400.5 L173.0,401.2 L173.1,401.9 L173.1,402.7 L173.0,403.5 L172.9,404.3 L172.7,405.1 L172.6,405.8 L172.4,406.6 L172.3,407.3 L172.3,408.1 L172.3,408.8 L172.4,409.5 L172.5,410.2 L172.7,410.9 L172.9,411.6 L173.1,412.3 L173.2,413.1 L173.3,413.9 L173.4,414.6 L173.3,415.4 L173.1,416.2Z" fill="none" stroke="#063a86" stroke-width=".8"/>
<ellipse cx="149.1" cy="413.3" rx="20.9" ry="25.3" transform="rotate(13 149.1 413.3)" fill="#ececea" stroke="#111" stroke-width="1.1"/>
</g>
<g id="base">
<path d="M122.8,670.6 L134.8,667.2 L146.6,671.8 L147,680 L144.4,686.6 L136.4,689 L124,683 Z" fill="#f01010" stroke="#300" stroke-width=".8" stroke-linejoin="round"/>
<path d="M131,668.4 L142,672.6 L141,684.6" fill="none" stroke="#500" stroke-width="1.05"/>
<ellipse cx="106.1" cy="692.6" rx="31" ry="13.2" fill="url(#gRing)" stroke="#300" stroke-width=".8"/>
<ellipse cx="106.1" cy="689.6" rx="30.4" ry="12.8" fill="#c40404" stroke="#400" stroke-width="1.05"/>
<ellipse cx="106.1" cy="686.4" rx="29.6" ry="12.2" fill="url(#gRingTop)" stroke="#400" stroke-width="1.05"/>
<ellipse cx="106.1" cy="686" rx="21.5" ry="8.8" fill="#a80000" stroke="#500" stroke-width=".8"/>
<path d="M90,660 L124.2,660 L124.2,682.6 Q107,692.6 90,683 Z" fill="url(#gPipe)" stroke="#0e0901" stroke-width=".5"/>
<path d="M141.6,676.4 L146.4,673.2 L152.6,675 L156.4,680.4 L155.6,686.8 L150,689.6 L144,688 L141,683 Z" fill="url(#gBolt)" stroke="#111" stroke-width=".8" stroke-linejoin="round"/>
<ellipse cx="152.4" cy="683" rx="3.8" ry="4.6" fill="#747474" stroke="#222" stroke-width="1.05"/>
<path d="M58,690.6 L60,686.8 L64,684.6 L77,681.4 L90.4,684 L93,691 L89,702 L76,705.4 L66,700.6 L59.6,695.4 Z" fill="url(#gEar)" stroke="#300" stroke-width=".8" stroke-linejoin="round"/>
<path d="M62,686.6 L88,690.4" fill="none" stroke="#500" stroke-width="1.05"/>
<path d="M74,695.6 L79,692 L85.6,693.6 L88.6,699 L87.6,704.8 L82,707.4 L76,705.8 L73.4,701 Z" fill="url(#gBolt)" stroke="#111" stroke-width=".8" stroke-linejoin="round"/>
<ellipse cx="84.2" cy="701.2" rx="3.6" ry="4.4" fill="#707070" stroke="#222" stroke-width="1.05"/>
</g>
<g id="ball">
<path d="M86.4,631 L86.4,642.6 L89,646.4 L89,656 L126,648 L126,634.4 L118,626.6 L117.6,621 L90,621 L88.6,626 Z" fill="url(#gBodyL)" stroke="#0e0901" stroke-width="1.05" stroke-linejoin="round"/>
<path d="M88.8,624.6 Q104,633.6 118,626.8 L119.4,628.2 Q104,636 88.6,627 Z" fill="#f7e3a0"/>
<path d="M86.6,631.4 Q104,641.8 124.6,633.6 L125.6,635.2 Q104,644.4 86.6,634 Z" fill="#f7e3a0"/>
<path d="M88.8,624.4 Q104,633.4 118,626.6 M88.6,627.2 Q104,636.2 119.4,628.4 M86.6,631.2 Q104,641.6 124.6,633.4 M86.6,634.2 Q104,644.6 125.8,635.4" fill="none" stroke="#0e0901" stroke-width="1.05"/>
<path d="M88.4,646.6 L91.4,645.6 L94,650.8 L88.6,652.8 Z" fill="#f6dc98" stroke="#0e0901" stroke-width="1.05" stroke-linejoin="round"/>
<path d="M91.8,586 L119.7,586 L119.7,622 Q105,630 91.8,623 Z" fill="url(#gBodyL)" stroke="#0e0901" stroke-width="1.05"/>
<path d="M91.8,597.4 Q105,602.6 119.7,597 M91.8,599.4 Q105,604.6 119.7,599 M91.8,615 Q105,620.6 119.7,614.6 M91.8,616.8 Q105,622.4 119.7,616.4" fill="none" stroke="#0e0901" stroke-width=".8"/>
<path d="M110.8,602 L119,602 L119,615.6 L110.8,615.6 Z" fill="#d4b168"/>
<path d="M110.8,602 L118.6,602 M110.8,615.6 L117,615.6" fill="none" stroke="#0e0901" stroke-width=".8"/>
<ellipse cx="110.8" cy="608.8" rx="3.8" ry="6.8" fill="#dcbc78" stroke="#0e0901" stroke-width="1.05"/>
<path d="M121,593.4 L123.5,592.9 L118,612.8 L124.8,632.8 L122.4,632.6 L115.3,612.6 Z" fill="#8a0000" stroke="#300" stroke-width=".8"/>
<path d="M123.5,592.9 L127,594.2 L131.4,607.3 L131,618.9 L127,632.4 L124.8,632.8 L119.6,612.8 Z" fill="#f50f0f" stroke="#300" stroke-width="1.05" stroke-linejoin="round"/>
<ellipse cx="126" cy="614.6" rx="2.6" ry="3" fill="#c9a75e" stroke="#0e0901" stroke-width=".8"/>
<ellipse cx="128.6" cy="614.8" rx="2.2" ry="2.6" fill="#e6cb8e" stroke="#0e0901" stroke-width=".8"/>
<path d="M82.3,567 L86.8,572.4 L86.8,588 L82.3,582.8 Z" fill="#c4a562" stroke="#0e0901" stroke-width="1.05" stroke-linejoin="round"/>
<path d="M86.8,572.4 L102.6,576 L102.6,590.6 L86.8,588 Z" fill="url(#gDark)" stroke="#0e0901" stroke-width="1.05" stroke-linejoin="round"/>
<path d="M102.6,576 L121,574.4 L121,589.2 L102.6,590.6 Z" fill="url(#gMid)" stroke="#0e0901" stroke-width="1.05" stroke-linejoin="round"/>
<path d="M121,574.4 L129.9,569.5 L129.9,583.4 L121,589.2 Z" fill="url(#gLight)" stroke="#0e0901" stroke-width="1.05" stroke-linejoin="round"/>
<path d="M82.3,567 L87.4,561.9 L107.7,559.3 L125.4,561.9 L129.9,569.5 L121,574.4 L102.6,576 L86.8,572.4 Z" fill="url(#gTop)" stroke="#0e0901" stroke-width=".8" stroke-linejoin="round"/>
<ellipse cx="106.4" cy="567.6" rx="19" ry="6.4" fill="url(#gHole)" stroke="#0e0901" stroke-width="1.05"/>
<path d="M90,570 Q106.4,578.4 123,569.8 Q106.4,573.6 90,570Z" fill="#f3d58a" opacity=".9"/>
</g>
</defs>
<use href="#headR"/>
<g transform="translate(126.4 401.7) rotate(25.6)"><rect x="-80" y="0" width="80" height="24.6" fill="#fff"/><text x="-70.3" y="15.4" transform="rotate(1.6 -70.3 15.4)" font-family="Liberation Sans, sans-serif" font-size="15.5" letter-spacing="1" fill="#0000ff" stroke="#fff" stroke-width=".1">Диаметр</text></g>
<g fill="none" stroke-width="1"><path d="M42,381.6 L58.4,382.6 M53,380.6 L59.6,383.6 M77.4,377 L90,374 M91,384.4 L107,381" stroke="#ff0000"/><ellipse cx="106.3" cy="375.9" rx="13.6" ry="4.7" stroke="#007f00"/><path d="M106.5,375.6 L106.5,294" stroke="#0000ff" stroke-width="1" shape-rendering="crispEdges"/><path d="M106.5,279.4 L102.6,294 L110.4,294 Z" stroke="#0000ff" fill="#fff"/></g>
<use href="#base"/><use href="#ball"/>
<g transform="translate(106 660.8) rotate(-14.8)"><rect x="-46" y="-12.65" width="92" height="25.3" fill="#fff"/><text x="-40.1" y="4.4" font-family="Liberation Sans, sans-serif" font-size="15.5" letter-spacing=".8" fill="#0000ff" stroke="#fff" stroke-width=".1">Диаметр</text></g>
<g fill="none" stroke-width="1"><path d="M51,682.2 L71,681.2 M58,679.8 L72,685 M89,680.4 L101.6,679.6 M89.6,681.4 L103,688.4" stroke="#ff0000"/><ellipse cx="106.2" cy="694.1" rx="13.2" ry="4.8" stroke="#007f00"/><path d="M106.5,694 L106.5,777" stroke="#0000ff" stroke-width="1" shape-rendering="crispEdges"/><path d="M106.5,790.4 L103,777 L110,777 Z" stroke="#0000ff" fill="#fff"/></g>
<g transform="translate(170 -43)">
<use href="#base"/>
<rect x="92.7" y="428" width="28.9" height="238" fill="url(#gPipe)"/>
<path d="M92.7,428 L92.7,666 M121.6,428 L121.6,666" fill="none" stroke="#0e0901" stroke-width="1" shape-rendering="crispEdges"/>
<path d="M88.4,646.6 L91.4,645.6 L94,650.8 L88.6,652.8 Z" fill="#f6dc98" stroke="#0e0901" stroke-width="1.05" stroke-linejoin="round"/>
<use href="#headB"/>
<g transform="translate(126.4 401.7) rotate(25.6)"><rect x="-80" y="0" width="80" height="24.6" fill="#fff"/><text x="-70.3" y="15.4" transform="rotate(1.6 -70.3 15.4)" font-family="Liberation Sans, sans-serif" font-size="15.5" letter-spacing="1" fill="#0000ff" stroke="#fff" stroke-width=".1">Диаметр</text></g>
<g fill="none" stroke-width="1"><path d="M42,381.6 L58.4,382.6 M53,380.6 L59.6,383.6 M77.4,377 L90,374 M91,384.4 L107,381" stroke="#ff0000"/><path d="M93.4,375.8 L96.6,372.4 L103.6,371.4 L108,373.4 L110.8,371.4 L117,372.2 L120,375.6 L116.6,379.6 L109.6,380.4 L105.6,378.8 L102.4,380.6 L96,379.6 Z M105.6,378.8 L108,373.4" stroke="#007f00"/><path d="M106.5,375.6 L106.5,294" stroke="#0000ff" stroke-width="1" shape-rendering="crispEdges"/><path d="M106.5,279.4 L102.6,294 L110.4,294 Z" stroke="#0000ff" fill="#fff"/></g>
<g transform="translate(106 660.8) rotate(-14.8)"><rect x="-46" y="-12.65" width="92" height="25.3" fill="#fff"/><text x="-40.1" y="4.4" font-family="Liberation Sans, sans-serif" font-size="15.5" letter-spacing=".8" fill="#0000ff" stroke="#fff" stroke-width=".1">Диаметр</text></g>
<g fill="none" stroke-width="1"><path d="M51,682.2 L71,681.2 M58,679.8 L72,685 M89,680.4 L101.6,679.6 M89.6,681.4 L103,688.4" stroke="#ff0000"/><ellipse cx="106.2" cy="694.1" rx="13.2" ry="4.8" stroke="#007f00"/><path d="M106.5,694 L106.5,777" stroke="#0000ff" stroke-width="1" shape-rendering="crispEdges"/><path d="M106.5,790.4 L103,777 L110,777 Z" stroke="#0000ff" fill="#fff"/></g>
</g>
</svg>
<div id="dlg"></div>
<div id="lbl">Имя типа:</div>
<div id="combo">32.250</div>
<div id="search">Параметры поиска</div>
<div id="tbl"><div class="in"></div></div>
<div id="hdr"><div style="left:0;width:198px">Параметр</div><div style="left:198px;width:83px">Значение</div></div>
<div id="body">
<div class="grp"><span style="letter-spacing:0px">Графика</span></div>
<div class="row sel"><div class="c1" style="letter-spacing:0.3px">Изоляция (по умолчанию)</div><div class="c2" style="letter-spacing:0px"><span class="cb chk"></span></div><div class="c3">=</div></div>
<div class="row"><div class="c1" style="letter-spacing:0.107px">Использовать масштаб аннотаций</div><div class="c2" style="letter-spacing:0px"><span class="cb"></span></div><div class="c3">=</div></div>
<div class="grp"><span style="letter-spacing:0.37px">Текст</span></div>
<div class="row"><div class="c1" style="letter-spacing:-0.24px">ADSK_Обозначение</div><div class="c2" style="letter-spacing:0px"></div><div class="c3">=</div></div>
<div class="grp"><span style="letter-spacing:0.14px">Электросети - Нагрузки</span></div>
<div class="row dis"><div class="c1" style="letter-spacing:0.43px">Мощность</div><div class="c2" style="letter-spacing:-0.32px">67.00000 кВт</div><div class="c3">=</div></div>
<div class="grp"><span style="letter-spacing:0px">Размеры</span></div>
<div class="row dis"><div class="c1" style="letter-spacing:0px">AE</div><div class="c2" style="letter-spacing:-0.5px">250.0</div><div class="c3">=</div></div>
<div class="row"><div class="c1" style="letter-spacing:-0.5px">DN</div><div class="c2" style="letter-spacing:-0.05px">32.0 мм</div><div class="c3">=</div></div>
<div class="row"><div class="c1" style="letter-spacing:0.22px">DN наружный</div><div class="c2" style="letter-spacing:-0.5px">42.0</div><div class="c3">=</div></div>
<div class="row dis"><div class="c1" style="letter-spacing:0.1px">Высота кожуха</div><div class="c2" style="letter-spacing:-0.5px">550.0</div><div class="c3">=</div></div>
<div class="row dis"><div class="c1" style="letter-spacing:0px">Высота отверстия под термометра</div><div class="c2" style="letter-spacing:-0.5px">454.6</div><div class="c3">=</div></div>
<div class="row dis"><div class="c1" style="letter-spacing:0px">Высота прорезей</div><div class="c2" style="letter-spacing:-0.5px">25.0</div><div class="c3">=</div></div>
<div class="row dis"><div class="c1" style="letter-spacing:0px">Высота оси насоса</div><div class="c2" style="letter-spacing:-0.5px">321.0</div><div class="c3">=</div></div>
<div class="row dis"><div class="c1" style="letter-spacing:0.2px">Длина кожуха</div><div class="c2" style="letter-spacing:-0.5px">350.0</div><div class="c3">=</div></div>
<div class="row dis"><div class="c1" style="letter-spacing:0.245px">Длина половины кожуха</div><div class="c2" style="letter-spacing:-0.5px">171.0</div><div class="c3">=</div></div>
<div class="row dis"><div class="c1" style="letter-spacing:0.07px">Радиус под патрубок</div><div class="c2" style="letter-spacing:-0.5px">25.0</div><div class="c3">=</div></div>
<div class="row dis"><div class="c1" style="letter-spacing:0px">Радиус под термометр</div><div class="c2" style="letter-spacing:-0.5px">35.0</div><div class="c3">=</div></div>
<div class="row dis"><div class="c1" style="letter-spacing:0.4px">Ширина крышки кожуха</div><div class="c2" style="letter-spacing:-0.5px">90.0</div><div class="c3">=</div></div>
<div class="row dis"><div class="c1" style="letter-spacing:0.04px">Монтажная длина насоса</div><div class="c2" style="letter-spacing:-0.5px">180.0</div><div class="c3">=</div></div>
<div class="row dis"><div class="c1" style="letter-spacing:0.17px">Подключение насоса</div><div class="c2" style="letter-spacing:-0.5px">50.0</div><div class="c3">=</div></div>
<div class="row dis"><div class="c1" style="letter-spacing:0.18px">Ширина основания кожуха</div><div class="c2" style="letter-spacing:-0.5px">70.0</div><div class="c3">=</div></div>
<div class="grp"><span style="letter-spacing:0.43px">Механизмы</span></div>
<div class="row dis"><div class="c1" style="letter-spacing:-0.15px">ADSK_Потеря давления жидкости (</div><div class="c2" style="letter-spacing:-0.275px">0.000000 бары</div><div class="c3">=</div></div>
<div class="row"><div class="c1" style="letter-spacing:0px">ADSK_Расход жидкости (по умолча</div><div class="c2" style="letter-spacing:0px">0.0000 м<sup>3</sup>/ч</div><div class="c3">=</div></div>
<div class="row dis"><div class="c1" style="letter-spacing:-1.0px">Kvs</div><div class="c2" style="letter-spacing:0px">7.6000 м<sup>3</sup>/ч</div><div class="c3">=</div></div>
<div class="row"><div class="c1" style="letter-spacing:0px">Коэффициент K</div><div class="c2" style="letter-spacing:-0.5px">0.000000</div><div class="c3">=</div></div>
<div class="row dis"><div class="c1" style="letter-spacing:0.19px">Максимальный расход жидкости</div><div class="c2" style="letter-spacing:0px">3.6000 м<sup>3</sup>/ч</div><div class="c3">=</div></div>
</div>
<div id="hs"><div class="th"></div></div>
<div id="list"><div>25.250</div><div class="s">32.250</div></div>
<svg width="719" height="829" viewBox="0 0 719 829" style="z-index:6;pointer-events:none">
<defs>
<g id="house">
  <!-- origin at icon top-left (16x15) -->
  <path d="M0.6,6.2 L5,1.2 L9.2,0.2 L14.6,5.2 L14.2,11 L7.2,13.6 L1.4,11.8 Z" fill="#2c2f38"/>
  <path d="M5.2,1.9 L9,1 L13.6,5.3 L8,7 Z" fill="#f4f6f8"/>
  <path d="M1.6,6.4 L5.2,2.2 L7.6,7.2 L7.4,12.6 L2.3,11 Z" fill="#e8ebef"/>
  <path d="M8.2,7.4 L13.7,5.8 L13.4,10.4 L8,12.5 Z" fill="#9aa3b0"/>
  <path d="M3,7.6 L5.4,7.2 L5.6,12 L3.2,11.2 Z" fill="#23262e"/>
</g>
<g id="doc">
  <path d="M0.7,0.7 L8,0.7 L12.3,5 L12.3,13.3 L0.7,13.3 Z" fill="#e9edf2" stroke="#4b4f57" stroke-width="1.3" stroke-linejoin="round"/>
  <path d="M8,0.7 L8,5 L12.3,5" fill="#fff" stroke="#4b4f57" stroke-width="1.1" stroke-linejoin="round"/>
</g>
</defs>
<!-- tab icons -->
<use href="#house" x="79" y="72.6" opacity=".62"/>
<use href="#house" x="207" y="72.6"/>
<path d="M315.6,75.6 L324.8,84.8 M324.8,75.6 L315.6,84.8" stroke="#1a1a1a" stroke-width="1.7" fill="none"/>
<!-- checkbox tick -->
<path d="M635.6,134.2 L638.8,137.6 L643.8,130.8" stroke="#555" stroke-width="1.2" fill="none"/>
<!-- scrollbar arrow -->
<path d="M442.8,649 L438.4,652.6 L442.8,656.2" stroke="#505050" stroke-width="1.7" fill="none"/>
<!-- pencil -->
<g>
  <path d="M434,691 L435.6,686.4 L445.6,676.2 L449.4,679.4 L439,689.6 Z" fill="#e2c58a" stroke="#3a3a3a" stroke-width="1" stroke-linejoin="round"/>
  <path d="M445.6,676.2 L447.2,674.8 L450.6,677.8 L449.4,679.4 Z" fill="#a9604f" stroke="#3a3a3a" stroke-width="1" stroke-linejoin="round"/>
  <path d="M436.4,687.6 L446.4,677.4" stroke="#fff3d6" stroke-width="1" fill="none"/>
  <path d="M434,691 L435.6,686.4 L439,689.6 Z" fill="#f4f4f4" stroke="#3a3a3a" stroke-width="1" stroke-linejoin="round"/>
</g>
<!-- new doc -->
<use href="#doc" x="466.7" y="677"/>
<g fill="#ff9a1a" stroke="#ff9a1a" stroke-width="1.3">
  <path d="M468.4,674.6 L468.4,682.2 M464.6,678.4 L472.2,678.4 M465.7,675.7 L471.1,681.1 M471.1,675.7 L465.7,681.1" fill="none"/>
</g>
<circle cx="468.4" cy="678.4" r="1.3" fill="#fff3a0"/>
<!-- delete doc -->
<use href="#doc" x="496.6" y="677"/>
<path d="M495.2,675.2 L501.6,681.6 M501.6,675.2 L495.2,681.6" stroke="#d3151c" stroke-width="2.2" fill="none"/>
<!-- move up (disabled) -->
<g>
  <path d="M527.4,676.6 L531,681.6 L528.8,681.6 L528.8,689 L526,689 L526,681.6 L523.8,681.6 Z" fill="#9a9a9a"/>
  <rect x="533.6" y="676.6" width="6.6" height="12.8" fill="#eaf2fb"/>
  <path d="M540.4,676.6 L533.6,676.6 L533.6,689.4 L540.4,689.4 M533.6,683 L540.4,683" stroke="#b4b4b4" stroke-width="1.2" fill="none"/>
</g>
<!-- move down (enabled) -->
<g>
  <path d="M558,689.4 L562,683.6 L559.6,683.6 L559.6,676.4 L556.4,676.4 L556.4,683.6 L554,683.6 Z" fill="#176fd0"/>
  <rect x="564" y="676.6" width="6.6" height="12.8" fill="#d6e8fa"/>
  <path d="M570.8,676.6 L564,676.6 L564,689.4 L570.8,689.4 M564,683 L570.8,683" stroke="#2a7bd6" stroke-width="1.4" fill="none"/>
</g>
<!-- sort A-Z down -->
<g font-family="Liberation Sans, sans-serif" font-weight="bold" font-size="9.2" fill="#254a8e">
  <text x="599.2" y="682.4">A</text><text x="599.6" y="690.2">Z</text>
  <text x="629" y="682.4">A</text><text x="629.4" y="690.2">Z</text>
</g>
<path d="M609.8,676 L609.8,687" stroke="#16305e" stroke-width="1.2" fill="none"/>
<path d="M607.4,685.8 L609.8,689.6 L612.2,685.8 Z" fill="#16305e"/>
<path d="M640,689.6 L640,678.6" stroke="#16305e" stroke-width="1.2" fill="none"/>
<path d="M637.6,679.8 L640,676 L642.4,679.8 Z" fill="#16305e"/>
</svg>

<div id="link">Как управлять типоразмерами в<br><span style="letter-spacing:-.3px">семействе?</span></div>
</div>
</body></html>
